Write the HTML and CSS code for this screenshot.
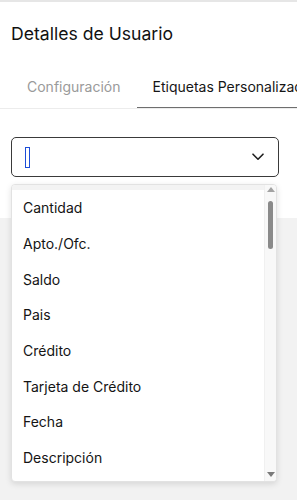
FILE: index.html
```html
<!DOCTYPE html>
<html lang="es">
<head>
<meta charset="utf-8">
<link rel="stylesheet" href="styles.css">
</head>
<body>
<div class="topbar"></div>
<div class="panel">
  <h1 class="title">Detalles de Usuario</h1>
  <div class="tabs">
    <div class="tab">Configuración</div>
    <div class="tab active">Etiquetas Personalizadas</div>
  </div>
  <div class="select">
    <span class="caret"></span>
    <svg class="chevron" width="12" height="8" viewBox="0 0 12 8"><path d="M1 1.2 L6 6.2 L11 1.2" fill="none" stroke="#1f1f1f" stroke-width="1.6" stroke-linecap="round" stroke-linejoin="round"/></svg>
  </div>
</div>
<div class="rest"></div>
<div class="dropdown">
  <div class="list">
    <div class="band"></div>
    <div class="item">Cantidad</div>
    <div class="item">Apto./Ofc.</div>
    <div class="item">Saldo</div>
    <div class="item">Pais</div>
    <div class="item">Crédito</div>
    <div class="item">Tarjeta de Crédito</div>
    <div class="item">Fecha</div>
    <div class="item">Descripción</div>
  </div>
  <div class="scrollbar">
    <svg class="arrow" width="8" height="5" viewBox="0 0 8 5"><path d="M0 5 L4 0 L8 5 Z" fill="#a3a3a3"/></svg>
    <div class="track"><div class="thumb"></div></div>
    <svg class="arrow" width="8" height="5" viewBox="0 0 8 5"><path d="M0 0 L8 0 L4 5 Z" fill="#7a7a7a"/></svg>
  </div>
</div>
</body>
</html>
```
FILE: styles.css
```css
html, body {
  margin: 0;
  height: 100%;
}
body {
  font-family: Inter, "Noto Sans", sans-serif;
  color: #1c1c1c;
  background: #f2f2f2;
  display: flex;
  flex-direction: column;
  overflow: hidden;
}
.topbar {
  height: 2px;
  background: #e6e6e6;
}
.panel {
  background: #fff;
  padding: 20px 0 41px 11px;
  overflow: hidden;
}
.title {
  margin: 0;
  font-size: 17.6px;
  font-weight: 400;
  line-height: 24px;
  color: #111;
}
.tabs {
  display: flex;
  margin-top: 19px;
  margin-left: -11px;
  padding-left: 11px;
  border-bottom: 1px solid #ececec;
  white-space: nowrap;
  overflow: hidden;
}
.tab {
  font-size: 14px;
  line-height: 20px;
  padding: 12px 16px 10px;
  border-bottom: 2px solid transparent;
  margin-bottom: -1px;
  color: #9a9a9a;
}
.tab.active {
  color: #161616;
  border-bottom-color: #6e6e6e;
}
.select {
  margin-top: 28px;
  height: 38px;
  border: 1px solid #3a3a3a;
  border-radius: 5px;
  display: flex;
  align-items: center;
  padding-left: 13px;
  padding-right: 14px;
  box-sizing: content-box;
  width: 239px;
}
.caret {
  width: 3px;
  height: 19px;
  border: 1px solid #1d4ed8;
}
.chevron {
  margin-left: auto;
}
.rest {
  flex: 1;
}
.dropdown {
  position: absolute;
  left: 11px;
  top: 184px;
  width: 266px;
  height: 298px;
  box-sizing: border-box;
  background: #fff;
  border: 1px solid #e2e2e2;
  border-radius: 4px;
  box-shadow: 0 2px 6px rgba(0, 0, 0, 0.12);
  display: flex;
  overflow: hidden;
}
.list {
  flex: 1;
  display: flex;
  flex-direction: column;
}
.band {
  height: 5px;
  background: #f3f3f3;
}
.item {
  height: 35.7px;
  flex-shrink: 0;
  display: flex;
  align-items: center;
  padding-left: 11px;
  font-size: 14px;
  color: #141414;
}
.scrollbar {
  width: 11px;
  background: #f8f8f8;
  border-left: 1px solid #f0f0f0;
  display: flex;
  flex-direction: column;
  align-items: center;
  padding: 2px 0 4px;
}
.track {
  flex: 1;
  width: 100%;
  display: flex;
  justify-content: center;
  padding-top: 9px;
}
.thumb {
  width: 5px;
  height: 48px;
  border-radius: 3px;
  background: #8a8a8a;
}
```
